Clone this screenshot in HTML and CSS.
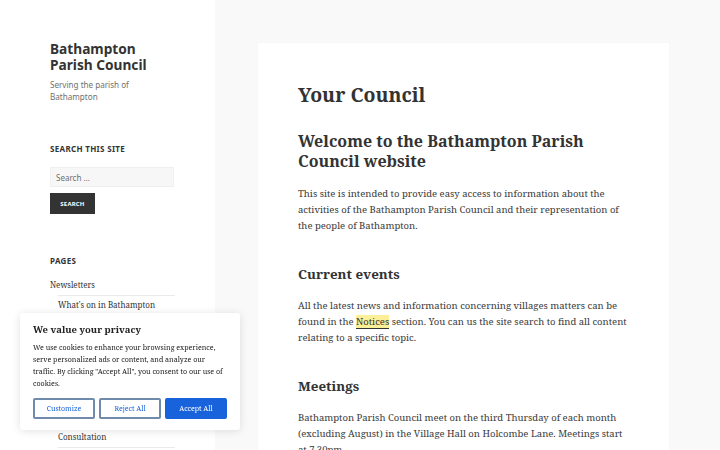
FILE: index.html
```html
<!DOCTYPE html>
<html lang="en">
<head>
<meta charset="utf-8">
<title>Your Council – Bathampton Parish Council</title>
<link rel="stylesheet" href="styles.css">
</head>
<body>
<div class="page">
  <aside class="sidebar">
    <div class="site-branding">
      <p class="site-title">Bathampton Parish Council</p>
      <p class="site-desc">Serving the parish of Bathampton</p>
    </div>
    <section class="widget">
      <h2 class="widget-title">Search this site</h2>
      <form class="search-form">
        <input class="search-field" type="search" placeholder="Search …">
        <button class="search-submit" type="button">Search</button>
      </form>
    </section>
    <section class="widget">
      <h2 class="widget-title">Pages</h2>
      <ul class="pages">
        <li class="top">Newsletters
          <ul class="children">
            <li>What's on in Bathampton</li>
            <li>Parish Council Meetings</li>
            <li>Minutes and Agendas</li>
            <li>Planning Applications</li>
            <li>Councillors and Staff</li>
            <li>Bathampton Neighbourhood Plan and Community Projects</li>
            <li>Consultation</li>
          </ul>
        </li>
      </ul>
    </section>
  </aside>
  <main class="main">
    <article class="card">
      <h1 class="entry-title">Your Council</h1>
      <h2 class="h2">Welcome to the Bathampton Parish Council website</h2>
      <p>This site is intended to provide easy access to information about the activities of the Bathampton Parish Council and their representation of the people of Bathampton.</p>
      <h3 class="h3">Current events</h3>
      <p>All the latest news and information concerning villages matters can be found in the <a class="hl" href="#">Notices</a> section. You can us the site search to find all content relating to a specific topic.</p>
      <h3 class="h3">Meetings</h3>
      <p>Bathampton Parish Council meet on the third Thursday of each month (excluding August) in the Village Hall on Holcombe Lane. Meetings start at 7.30pm.</p>
    </article>
  </main>
</div>
<div class="cookie">
  <p class="cookie-title">We value your privacy</p>
  <p class="cookie-text">We use cookies to enhance your browsing experience, serve personalized ads or content, and analyze our traffic. By clicking "Accept All", you consent to our use of cookies.</p>
  <div class="cookie-btns">
    <button class="cbtn outline" type="button">Customize</button>
    <button class="cbtn outline" type="button">Reject All</button>
    <button class="cbtn primary" type="button">Accept All</button>
  </div>
</div>
</body>
</html>
```
FILE: styles.css
```css
html, body {
  margin: 0;
  padding: 0;
}
body {
  background: #f9f9f9;
  font-family: "Noto Serif", "DejaVu Serif", serif;
  color: #333;
  overflow: hidden;
  height: 450px;
}
.page {
  display: flex;
  align-items: flex-start;
  min-height: 450px;
}
.sidebar {
  width: 215px;
  box-sizing: border-box;
  background: #fff;
  padding: 41px 40px 0 50px;
  min-height: 450px;
  align-self: stretch;
}
.site-branding p { margin: 0; }
.site-title {
  font-family: "Noto Sans", sans-serif;
  font-weight: 700;
  font-size: 13.7px;
  line-height: 16px;
  color: #333;
}
.site-desc {
  font-family: "Noto Sans", sans-serif;
  font-size: 8.1px;
  line-height: 12px;
  color: #707070;
  margin-top: 6px !important;
}
.widget { margin-top: 40px; }
.widget + .widget { margin-top: 41px; }
.widget-title {
  font-family: "Noto Sans", sans-serif;
  font-size: 8px;
  font-weight: 700;
  letter-spacing: 0.04em;
  text-transform: uppercase;
  line-height: 12px;
  margin: 0 0 12px;
  color: #333;
}
.search-form { display: flex; flex-direction: column; align-items: flex-start; gap: 6px; }
.search-field {
  width: 124px;
  height: 20px;
  box-sizing: border-box;
  border: 1px solid #f0f0f0;
  background: #f7f7f7;
  padding: 0 5px;
  font-family: "Noto Sans", sans-serif;
  font-size: 8px;
  color: #707070;
  outline: none;
}
.search-field::placeholder { color: #707070; }
.search-submit {
  width: 45px;
  height: 21px;
  border: 0;
  background: #333;
  color: #fff;
  font-family: "Noto Sans", sans-serif;
  font-weight: 700;
  font-size: 6px;
  letter-spacing: 0.03em;
  text-transform: uppercase;
  padding: 0;
}
.pages, .children {
  list-style: none;
  margin: 0;
  padding: 0;
}
.pages {
  font-size: 8px;
  line-height: 12px;
  color: #333;
}
.children { margin-top: 4px; margin-left: 8px; }
.children li {
  border-top: 1px solid #eaeaea;
  padding: 3px 0 4px;
  color: #333;
}
.children li:last-child { border-bottom: 1px solid #eaeaea; }
.main {
  flex: 1;
  padding: 43px 51px 0 43px;
}
.card {
  background: #fff;
  box-shadow: 0 0 1px rgba(0,0,0,0.06);
  padding: 39px 38px 40px 40px;
  min-height: 400px;
}
.entry-title {
  font-size: 19.5px;
  line-height: 26px;
  font-weight: 700;
  margin: 0 0 23px;
  color: #333;
}
.h2 {
  font-size: 16px;
  line-height: 20px;
  font-weight: 700;
  margin: 0 0 15px;
  color: #333;
}
.h3 {
  font-size: 13.4px;
  line-height: 20px;
  font-weight: 700;
  margin: 30px 0 14px;
  color: #333;
}
.card p {
  font-size: 9.5px;
  line-height: 16px;
  margin: 0;
  color: #3a3a3a;
}
.hl {
  color: #333;
  text-decoration: none;
  background: #fbef98;
  border-bottom: 1px solid #333;
}
.cookie {
  position: fixed;
  left: 20px;
  bottom: 20px;
  width: 220px;
  box-sizing: border-box;
  background: #fff;
  border-radius: 3px;
  box-shadow: 0 1px 8px rgba(0,0,0,0.12);
  padding: 10px 13px 11px;
}
.cookie-title {
  margin: 0 0 4px;
  font-weight: 700;
  font-size: 9.5px;
  line-height: 14px;
  color: #212121;
}
.cookie-text {
  margin: 0 4px 9px 0;
  font-size: 7.1px;
  line-height: 12px;
  color: #212121;
}
.cookie-btns { display: flex; gap: 4px; }
.cbtn {
  flex: 1;
  height: 21px;
  border-radius: 2px;
  font-family: "Noto Serif", "DejaVu Serif", serif;
  font-size: 7px;
  padding: 0;
}
.outline {
  background: #fff;
  border: 2px solid #6f8aab;
  color: #1863dc;
}
.primary {
  background: #1863dc;
  border: 2px solid #1863dc;
  color: #fff;
}
```
